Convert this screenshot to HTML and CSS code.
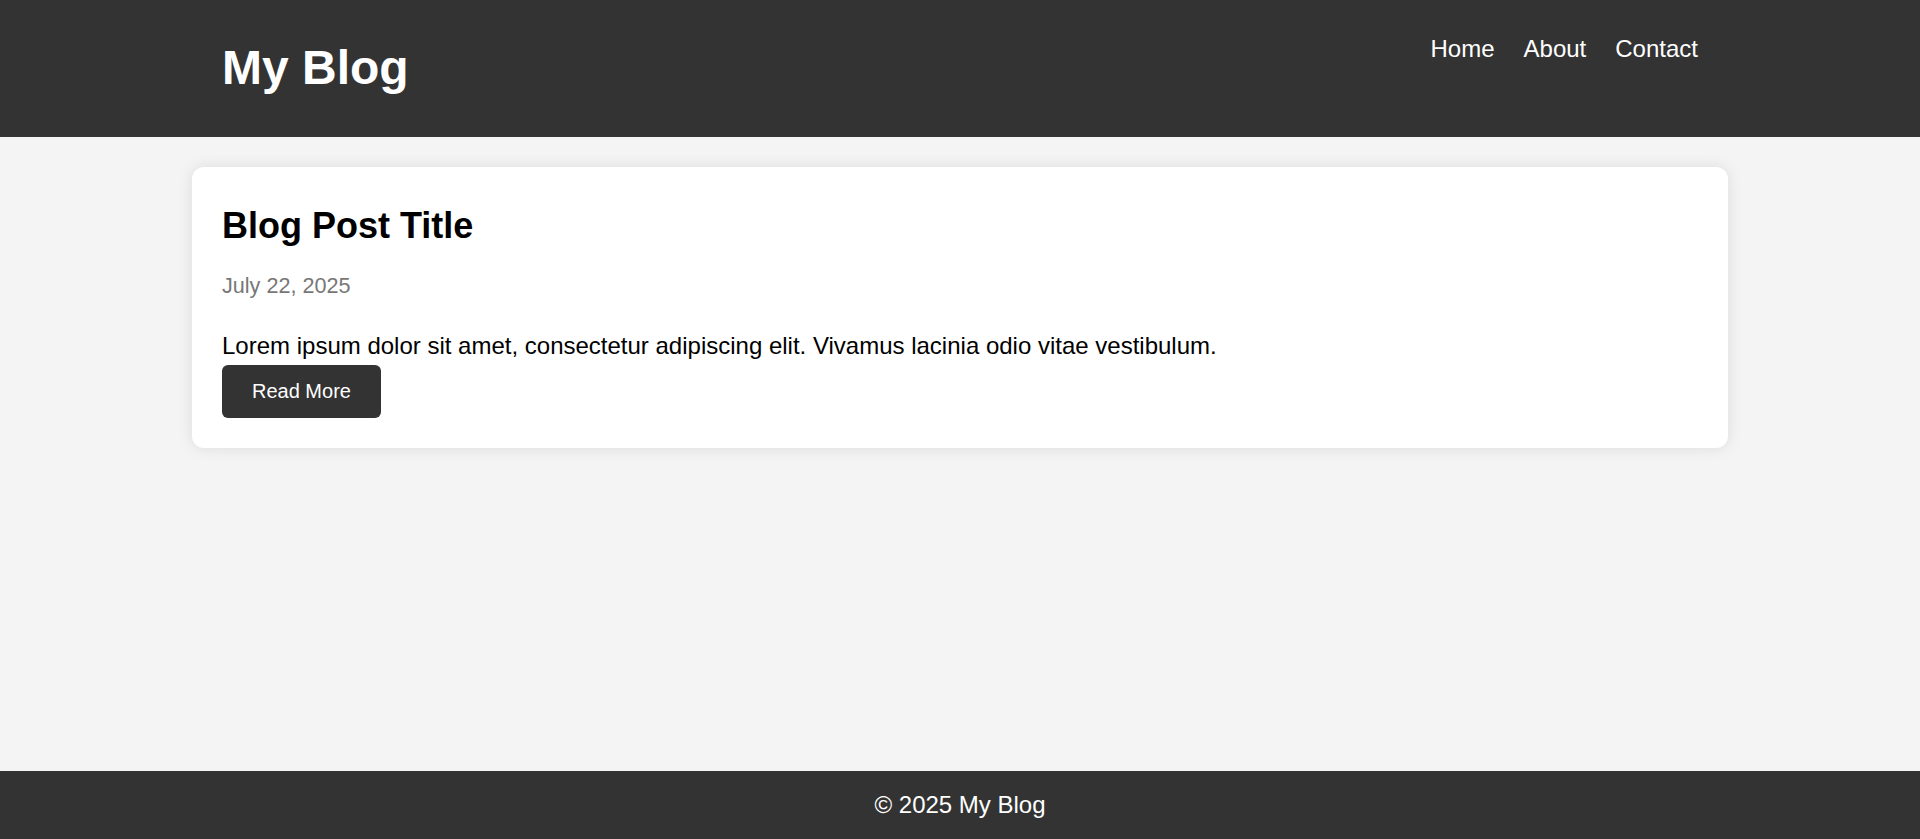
FILE: index.html
```html
<!DOCTYPE html>
<html lang="en">
<head>
<meta charset="utf-8">
<title>My Blog</title>
<link rel="stylesheet" href="styles.css">
</head>
<body>
<header class="site-header">
  <div class="header-inner">
    <h1 class="logo">My Blog</h1>
    <nav class="nav">
      <a href="#">Home</a>
      <a href="#">About</a>
      <a href="#">Contact</a>
    </nav>
  </div>
</header>
<main class="main">
  <article class="post">
    <h2 class="post-title">Blog Post Title</h2>
    <p class="post-date">July 22, 2025</p>
    <p class="post-excerpt">Lorem ipsum dolor sit amet, consectetur adipiscing elit. Vivamus lacinia odio vitae vestibulum.</p>
    <a href="#" class="btn">Read More</a>
  </article>
</main>
<footer class="site-footer">&copy; 2025 My Blog</footer>
</body>
</html>
```
FILE: styles.css
```css
* { box-sizing: border-box; }
html, body { height: 100%; }
body {
  margin: 0;
  font-family: "Liberation Sans", Arial, sans-serif;
  font-size: 24px;
  background: #f4f4f4;
  color: #000;
  display: flex;
  flex-direction: column;
  min-height: 100vh;
}
.site-header {
  background: #333;
  color: #fff;
  padding: 35px 0 42px;
}
.header-inner {
  width: 1536px;
  margin: 0 auto;
  padding: 0 30px;
  display: flex;
  justify-content: space-between;
  align-items: flex-start;
}
.logo {
  margin: 5px 0 0;
  font-size: 48px;
  font-weight: bold;
}
.nav {
  display: flex;
  gap: 29px;
}
.nav a {
  color: #fff;
  text-decoration: none;
  font-size: 24px;
}
.main {
  flex: 1;
  width: 1536px;
  margin: 30px auto 0;
}
.post {
  background: #fff;
  border-radius: 12px;
  box-shadow: 0 0 15px rgba(0,0,0,0.1);
  padding: 30px;
}
.post-title {
  margin: 8px 0 26px;
  font-size: 36px;
  font-weight: bold;
}
.post-date {
  margin: 0 0 33px;
  font-size: 21.6px;
  color: #777;
}
.post-excerpt {
  margin: 0 0 5px;
}
.btn {
  display: inline-block;
  background: #333;
  color: #fff;
  text-decoration: none;
  font-size: 20px;
  padding: 15px 30px;
  border-radius: 6px;
}
.site-footer {
  background: #333;
  color: #fff;
  text-align: center;
  padding: 20px 0;
  height: 68px;
}
```
